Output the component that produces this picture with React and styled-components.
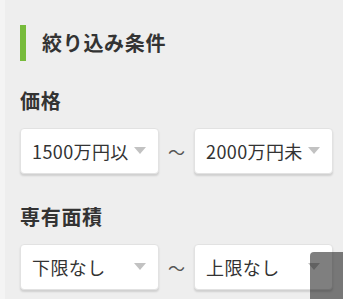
import React from 'react'
import styled, { createGlobalStyle } from 'styled-components'

const Global = createGlobalStyle`
  html, body {
    margin: 0;
    padding: 0;
    background: #eeeeee;
    font-family: "Noto Sans CJK JP", "Noto Sans", sans-serif;
    color: #333;
    overflow: hidden;
  }
`

const Page = styled.div`
  min-height: 299px;
  box-sizing: border-box;
  border-left: 5px solid #f4f4f4;
  padding: 25px 9px 0 15px;
`

const Heading = styled.h2`
  display: flex;
  align-items: center;
  height: 36px;
  margin: 0 0 26px 0;
  padding-left: 16px;
  border-left: 6px solid #77bb3b;
  font-size: 20px;
  font-weight: bold;
  letter-spacing: 0.7px;
  line-height: 36px;
  color: #333;
`

const Section = styled.div`
  margin-bottom: ${p => p.gap || 0}px;
`

const Label = styled.h3`
  margin: 0 0 13px 0;
  font-size: 20px;
  font-weight: bold;
  letter-spacing: 0.7px;
  line-height: 28px;
  color: #333;
`

const Row = styled.div`
  display: flex;
  align-items: center;
`

const Select = styled.div`
  position: relative;
  box-sizing: border-box;
  width: 139px;
  height: 46px;
  padding: 0 24px 0 11px;
  background: #fff;
  border: 1px solid #e2e2e2;
  border-radius: 4px;
  box-shadow: 0 2px 2px rgba(0, 0, 0, 0.13);

  &::after {
    content: '';
    position: absolute;
    right: 12px;
    top: 18px;
    border-left: 6px solid transparent;
    border-right: 6px solid transparent;
    border-top: 7px solid #c2c2c2;
  }
`

/* wraps per character, the overflowing line stays hidden like a native select */
const Value = styled.span`
  display: block;
  height: 44px;
  overflow: hidden;
  word-break: break-all;
  font-size: 18px;
  letter-spacing: 0.4px;
  line-height: 44px;
  color: #333;
`

const Tilde = styled.span`
  width: 35px;
  text-align: center;
  font-size: 17px;
  color: #555;
`

const PageTop = styled.div`
  position: fixed;
  left: 310px;
  top: 252px;
  width: 50px;
  height: 60px;
  background: rgba(0, 0, 0, 0.5);
  border-radius: 4px 0 0 0;
`

export default function App() {
  return (
    <>
      <Global />
      <Page>
        <Heading>絞り込み条件</Heading>
        <Section gap={29}>
          <Label>価格</Label>
          <Row>
            <Select><Value>1500万円以上</Value></Select>
            <Tilde>〜</Tilde>
            <Select><Value>2000万円未満</Value></Select>
          </Row>
        </Section>
        <Section>
          <Label>専有面積</Label>
          <Row>
            <Select><Value>下限なし</Value></Select>
            <Tilde>〜</Tilde>
            <Select><Value>上限なし</Value></Select>
          </Row>
        </Section>
      </Page>
      <PageTop />
    </>
  )
}
